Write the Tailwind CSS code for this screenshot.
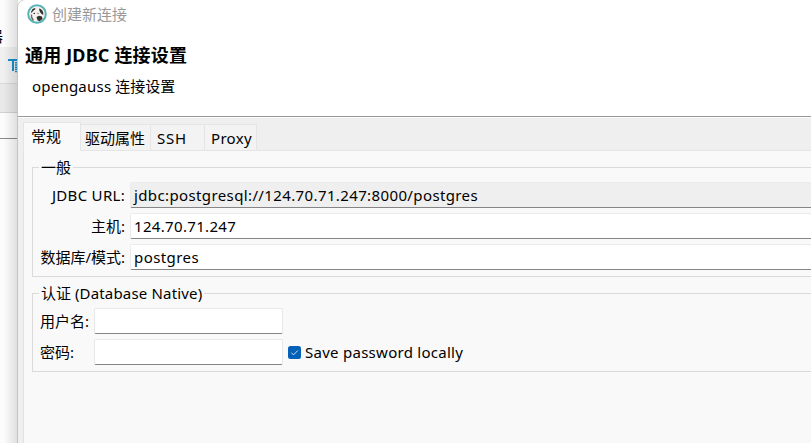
<!DOCTYPE html>
<html lang="zh-CN">
<head>
<meta charset="utf-8">
<title>创建新连接</title>
<script src="https://cdn.jsdelivr.net/npm/@tailwindcss/browser@4"></script>
</head>
<body class="w-[811px] h-[443px] overflow-hidden bg-[#fafafa] text-black text-[15px] leading-[20px] whitespace-nowrap font-['Noto_Sans','Noto_Sans_CJK_SC',sans-serif]">
<div class="relative flex h-[443px]">
  <!-- Main window behind the dialog -->
  <aside class="w-[26px] shrink-0 flex flex-col bg-[#fcfcfc]">
    <div class="h-[47px] pt-[28px] overflow-hidden"><div class="-ml-[12px] text-[15px] leading-[17px]">器</div></div>
    <div class="h-[37px] bg-[#f0f0f0] border-b border-[#d9d9d9] pt-[12px] pl-[8px]">
      <svg width="12" height="16" viewBox="0 0 12 16" fill="none" stroke="#1590c9"><path d="M0 1h12M5 1v11" stroke-width="2"/><path d="M8 3v11" stroke-width="2" stroke-dasharray="1.500 .7"/></svg>
    </div>
    <div class="h-[29px] bg-[#e9e9e9] border-b border-[#d2d2d2]"></div>
    <div class="h-[26px] border-b border-[#8a8a8a]"></div>
  </aside>
  <div class="absolute left-0 top-0 w-[18px] h-[443px] bg-linear-to-r from-transparent from-20% to-black/12"></div>

  <!-- Dialog -->
  <main class="absolute left-[17px] top-[-1px] w-[810px] h-[460px] flex flex-col rounded-tl-[9px] border border-[#c4c4c4] bg-[#efefef] overflow-hidden">
    <header class="h-[118px] shrink-0 bg-white border-b border-white">
      <div class="h-[117px] border-b border-[#999]">
        <div class="flex items-center h-[28px] pl-[9px] gap-[5px] text-[#999]">
          <svg width="20" height="20" viewBox="0 0 20 20"><circle cx="10" cy="10" r="8.800" fill="#f4f1ee" stroke="#55b3b8" stroke-width="2"/><path d="M4 8L5.500 5 8 4 8.500 5 6 7 4.500 9zM12 4.500c3 .5 4.800 3.500 4.200 6.500L14 9.500 12.500 7zM9.500 13l2.500-1.200 3 .7.500 2.500-3 2.200-2-1zM6.500 9l1.500-.3v1.300H6.500z" fill="#34302e"/><path d="M4.500 10.500c-.3 2 .5 4.500 2 6" stroke="#6d6865" stroke-width="1.200" fill="none"/><path d="M10.500 9.200l1 .3" stroke="#34302e"/></svg>
          <span>创建新连接</span>
        </div>
        <h1 class="mt-[16px] pl-[7px] text-[18px] leading-[22px] font-bold tracking-[0.17px]">通用 JDBC 连接设置</h1>
        <p class="mt-[10px] pl-[14px]"><span class="tracking-[0.22px]">opengauss</span> 连接设置</p>
      </div>
    </header>

    <nav class="flex items-end h-[33px] shrink-0 ml-[5px] border-b border-[#e5e5e5]">
      <div class="w-[58px] h-[29px] -mb-px bg-[#f9f9f9] border border-b-0 border-[#e5e5e5] pl-[7px] pt-[3px]">常规</div>
      <div class="w-[70px] h-[26px] bg-[#f3f3f3] border-t border-r border-[#e5e5e5] pl-[4px] pt-[3px]">驱动属性</div>
      <div class="w-[54px] h-[26px] bg-[#f3f3f3] border-t border-r border-[#e5e5e5] pl-[6px] pt-[3px] tracking-[0.8px]">SSH</div>
      <div class="w-[52px] h-[26px] bg-[#f3f3f3] border-t border-r border-[#e5e5e5] pl-[6px] pt-[3px] tracking-[0.3px]">Proxy</div>
    </nav>

    <section class="ml-[5px] flex-1 bg-[#f9f9f9] border-l border-[#e2e2e2] pl-[8px] pt-[7px]">
      <fieldset class="h-[119px] border border-[#dadada] pl-[7px]">
        <legend class="h-[19px] leading-[19px] -ml-px px-[2px]">一般</legend>
        <div class="mt-[5px] grid grid-cols-[85px_1fr] gap-x-[5px] gap-y-[5px]">
          <label class="text-right leading-[26px] tracking-[0.3px]">JDBC URL:</label>
          <div class="h-[26px] bg-[#efefef] border border-[#ebebeb] border-b-[#858585] rounded-[2px] pl-[3px] leading-[25px] tracking-[0.38px]">jdbc:postgresql://124.70.71.247:8000/postgres</div>
          <label class="text-right leading-[26px]">主机:</label>
          <div class="h-[26px] bg-white border border-[#ebebeb] border-b-[#858585] rounded-[2px] pl-[3px] leading-[25px] tracking-[0.33px]">124.70.71.247</div>
          <label class="text-right leading-[26px]">数据库/模式:</label>
          <div class="h-[26px] bg-white border border-[#ebebeb] border-b-[#858585] rounded-[2px] pl-[3px] leading-[25px] tracking-[0.42px]">postgres</div>
        </div>
      </fieldset>
      <fieldset class="mt-[7px] h-[88px] border border-[#dadada] pl-[7px]">
        <legend class="h-[19px] leading-[19px] -ml-px px-[2px]">认证 <span class="tracking-[0.17px]">(Database Native)</span></legend>
        <div class="mt-[5px] grid grid-cols-[49px_189px_1fr] gap-x-[5px] gap-y-[5px]">
          <label class="leading-[26px]">用户名:</label>
          <div class="h-[26px] bg-white border border-[#e8e8e8] border-b-[#858585] rounded-[2px]"></div>
          <span></span>
          <label class="leading-[26px]">密码:</label>
          <div class="h-[26px] bg-white border border-[#e8e8e8] border-b-[#858585] rounded-[2px]"></div>
          <div class="flex items-center gap-[4px]">
            <svg width="13" height="13" viewBox="0 0 13 13"><rect width="13" height="13" rx="2.500" fill="#0560b7"/><path d="M3.300 6.700l2.200 2.200 4.300-4.400" fill="none" stroke="#fff" stroke-width=".8"/></svg>
            <span class="tracking-[0.27px]">Save password locally</span>
          </div>
        </div>
      </fieldset>
    </section>
  </main>
</div>
</body>
</html>
